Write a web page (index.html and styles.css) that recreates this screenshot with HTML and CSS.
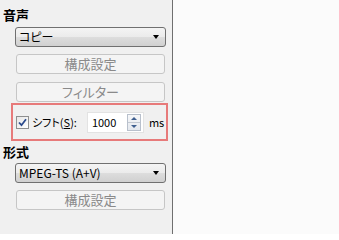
FILE: index.html
```html
<!DOCTYPE html>
<html lang="ja">
<head>
<meta charset="utf-8">
<link rel="stylesheet" href="styles.css">
</head>
<body>
<div class="screen">
  <div class="panel">
    <div class="heading">音声</div>
    <div class="combo combo-first"><span class="combo-text">コピー</span><span class="arrow"></span></div>
    <div class="btn btn-first">構成設定</div>
    <div class="btn btn-second">フィルター</div>
    <div class="shift-box">
      <span class="check">
        <svg width="9" height="9" viewBox="0 0 9 9"><path d="M1 4.5 L3.5 7.2 L8 1.2" fill="none" stroke="#2b4a8c" stroke-width="1.8"/></svg>
      </span>
      <span class="shift-label">シフト(<u>S</u>):</span>
      <div class="num">
        <span class="num-text">1000</span>
        <span class="spin"><span class="spin-up"><i class="tri-up"></i></span><span class="spin-down"><i class="tri-down"></i></span></span>
      </div>
      <span class="unit">ms</span>
    </div>
    <div class="heading heading-format">形式</div>
    <div class="combo combo-format"><span class="combo-text">MPEG-TS (A+V)</span><span class="arrow"></span></div>
    <div class="btn btn-third">構成設定</div>
  </div>
  <div class="divider"></div>
  <div class="canvas"></div>
</div>
</body>
</html>
```

FILE: styles.css
```css
html, body {
  margin: 0;
  padding: 0;
  width: 339px;
  height: 234px;
  overflow: hidden;
  font-family: "Noto Sans CJK JP", "Noto Sans", sans-serif;
  font-size: 12px;
  font-feature-settings: "palt";
  color: #000;
}
.screen {
  display: flex;
  width: 339px;
  height: 234px;
}
.panel {
  width: 172px;
  flex: none;
  background: #f0f0f0;
  box-sizing: border-box;
  padding-top: 8px;
  display: flex;
  flex-direction: column;
}
.divider {
  width: 1px;
  flex: none;
  background: #6f6f6f;
}
.canvas {
  flex: 1;
  background: #fbfbfb;
}
.heading {
  margin-left: 3px;
  font-weight: bold;
  font-size: 13px;
  line-height: 14px;
  height: 14px;
}
.heading-format {
  margin-top: 4px;
}
.combo {
  margin-left: 15px;
  width: 151px;
  height: 20px;
  box-sizing: border-box;
  border: 1px solid #707070;
  border-radius: 3px;
  background: linear-gradient(#f4f4f4, #ebebeb 50%, #dddddd 51%, #d0d0d0);
  display: flex;
  align-items: center;
  padding-left: 3px;
  padding-right: 6px;
}
.combo-first { margin-top: 5px; }
.combo-format { margin-top: 4px; }
.combo-text {
  flex: 1;
  line-height: 16px;
  white-space: nowrap;
}
.arrow {
  width: 0;
  height: 0;
  border-left: 3.5px solid transparent;
  border-right: 3.5px solid transparent;
  border-top: 4px solid #000;
}
.btn {
  margin-left: 16px;
  width: 149px;
  height: 20px;
  box-sizing: border-box;
  border: 1px solid #c6c6c6;
  border-radius: 3px;
  background: #f4f4f4;
  color: #8a8a8a;
  text-align: center;
  line-height: 18px;
  font-size: 13px;
  white-space: nowrap;
}
.btn-first { margin-top: 7px; }
.btn-second { margin-top: 8px; }
.btn-third { margin-top: 7px; }
.shift-box {
  margin-top: 1px;
  margin-left: 11px;
  width: 157px;
  height: 38px;
  box-sizing: border-box;
  border: 2px solid #e77a7a;
  display: flex;
  align-items: center;
  padding-left: 3px;
}
.check {
  flex: none;
  width: 13px;
  height: 13px;
  box-sizing: border-box;
  border: 1px solid #8e8f8f;
  background: linear-gradient(135deg, #e6e6e6, #ffffff);
  display: flex;
  align-items: center;
  justify-content: center;
}
.shift-label {
  flex: none;
  margin-left: 3px;
  line-height: 14px;
  font-size: 11px;
  white-space: nowrap;
}
.shift-label u {
  text-underline-offset: 1px;
}
.num {
  flex: none;
  margin-left: 10px;
  width: 57px;
  height: 21px;
  box-sizing: border-box;
  border: 1px solid #e3e3e3;
  background: #fff;
  display: flex;
  align-items: center;
  padding-left: 4px;
  padding-right: 2px;
}
.num-text {
  flex: 1;
  line-height: 14px;
  font-size: 11px;
}
.spin {
  flex: none;
  width: 14px;
  height: 17px;
  box-sizing: border-box;
  border: 1px solid #b8c0cc;
  display: flex;
  flex-direction: column;
  background: linear-gradient(#f6f7f9, #e4e8ee);
}
.spin-up, .spin-down {
  flex: 1;
  display: flex;
  align-items: center;
  justify-content: center;
}
.spin-up { border-bottom: 1px solid #c3c9d2; }
.tri-up, .tri-down {
  display: block;
  width: 0;
  height: 0;
  border-left: 3px solid transparent;
  border-right: 3px solid transparent;
}
.tri-up { border-bottom: 3px solid #3f5f8f; }
.tri-down { border-top: 3px solid #3f5f8f; }
.unit {
  flex: none;
  margin-left: 5px;
  line-height: 14px;
  font-size: 11px;
  white-space: nowrap;
}
```
